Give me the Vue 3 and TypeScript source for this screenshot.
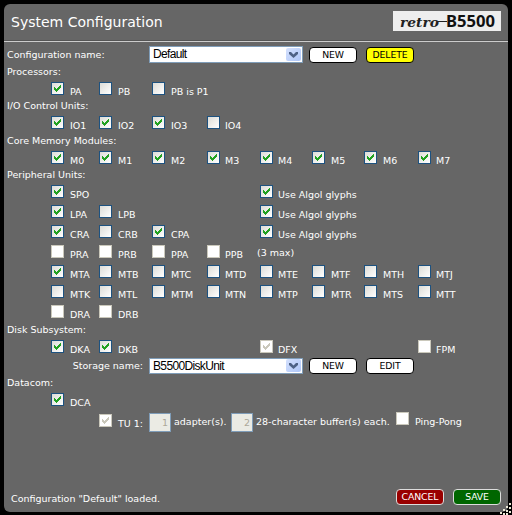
<script setup lang="ts">
type State = 'on' | 'off' | 'disabled' | 'disabled-on'
interface Cell {
  col: number
  label: string
  state: State
  wide?: boolean
}
interface Section {
  title: string
  kind: string
  rows: Cell[][]
}

const line = (labels: string[], states: State[]): Cell[] =>
  labels.map((label, i) => ({ col: i + 2, label, state: states[i] ?? states[states.length - 1] }))
const algol: Cell = { col: 6, label: 'Use Algol glyphs', state: 'on', wide: true }

const sections: Section[] = [
  {
    title: 'Processors:',
    kind: 'processors',
    rows: [line(['PA', 'PB', 'PB is P1'], ['on', 'off'])],
  },
  {
    title: 'I/O Control Units:',
    kind: 'io',
    rows: [line(['IO1', 'IO2', 'IO3', 'IO4'], ['on', 'on', 'on', 'off'])],
  },
  {
    title: 'Core Memory Modules:',
    kind: 'memory',
    rows: [line(['M0', 'M1', 'M2', 'M3', 'M4', 'M5', 'M6', 'M7'], ['on'])],
  },
  {
    title: 'Peripheral Units:',
    kind: 'peripherals',
    rows: [
      [...line(['SPO'], ['on']), algol],
      [...line(['LPA', 'LPB'], ['on', 'off']), algol],
      [...line(['CRA', 'CRB', 'CPA'], ['on', 'off', 'on']), algol],
      line(['PRA', 'PRB', 'PPA', 'PPB'], ['disabled']),
      line(['MTA', 'MTB', 'MTC', 'MTD', 'MTE', 'MTF', 'MTH', 'MTJ'], ['on', 'off']),
      line(['MTK', 'MTL', 'MTM', 'MTN', 'MTP', 'MTR', 'MTS', 'MTT'], ['off']),
      line(['DRA', 'DRB'], ['disabled']),
    ],
  },
  {
    title: 'Disk Subsystem:',
    kind: 'disk',
    rows: [
      [
        ...line(['DKA', 'DKB'], ['on']),
        { col: 6, label: 'DFX', state: 'disabled-on' },
        { col: 9, label: 'FPM', state: 'disabled' },
      ],
    ],
  },
  { title: 'Datacom:', kind: 'datacom', rows: [line(['DCA'], ['on'])] },
]
const tick = 'M2 4h1v1h1v1h1v-1h1v-1h1v-1h1v-1h1v3h-1v1h-1v1h-1v1h-1v1h-1v-1h-1v-1h-1z'
</script>

<template>
  <main class="panel">
    <header class="top">
      <h1>System Configuration</h1>
      <svg class="logo" width="108" height="20" viewBox="0 0 108 20">
        <text class="retro" x="7" y="16" textLength="39" lengthAdjust="spacingAndGlyphs">retro</text>
        <path d="M44 10.500h10" stroke="#222" stroke-width="1" />
        <text class="model" x="53" y="16" textLength="49" lengthAdjust="spacingAndGlyphs">B5500</text>
      </svg>
    </header>

    <div class="picker config">
      <span class="caption">Configuration name:</span>
      <div class="select"><span>Default</span>
        <i><svg width="15" height="13"><path d="M3 4h2l2.500 2.500L10 4h2v2l-4.500 4L3 6z" /></svg></i>
      </div>
      <button class="first">NEW</button><button class="delete">DELETE</button>
    </div>

    <template v-for="s in sections" :key="s.title">
      <section :class="s.kind">
        <h2>{{ s.title }}</h2>
        <div v-for="(row, r) in s.rows" :key="r" class="row">
          <label v-for="c in row" :key="c.label" :class="['c' + c.col, { wide: c.wide }]">
            <svg :class="['box', c.state]" width="13" height="13">
              <path v-if="c.state === 'on' || c.state === 'disabled-on'" :d="tick" />
            </svg>
            <span>{{ c.label }}</span>
          </label>
          <span v-if="s.kind === 'peripherals' && r === 3" class="max">(3 max)</span>
        </div>
      </section>
      <div v-if="s.kind === 'disk'" class="picker storage">
        <span class="caption">Storage name:</span>
        <div class="select"><span>B5500DiskUnit</span>
          <i><svg width="15" height="13"><path d="M3 4h2l2.500 2.500L10 4h2v2l-4.500 4L3 6z" /></svg></i>
        </div>
        <button class="first">NEW</button><button>EDIT</button>
      </div>
    </template>

    <div class="terminal">
      <svg class="box disabled-on" width="13" height="13"><path :d="tick" /></svg>
      <span class="tu">TU 1:</span>
      <span class="num">1</span>
      <span class="adapters">adapter(s).</span>
      <span class="num">2</span>
      <span class="buffers">28-character buffer(s) each.</span>
      <svg class="box disabled ping" width="13" height="13" />
      <span class="pp">Ping-Pong</span>
    </div>

    <footer>
      <span class="status">Configuration "Default" loaded.</span>
      <button class="cancel">CANCEL</button><button class="save">SAVE</button>
    </footer>
    <svg class="grip" width="12" height="12">
      <path d="M9 0h2v2h-2zM6 3h2v2h-2zM9 4h2v2h-2zM3 6h2v2h-2zM6 7h2v2h-2zM9 8h2v2h-2zM0 9h2v2h-2zM3 10h2v2h-2zM6 10h2v2h-2z" />
    </svg>
  </main>
</template>

<style>
body {
  background: #000;
}
</style>
<style scoped>
.panel {
  box-sizing: border-box;
  position: relative;
  width: 504px;
  height: 508px;
  margin: 4px;
  display: flow-root;
  border-radius: 6px;
  background: #666;
  color: #fff;
  font: 9.5px/12px 'DejaVu Sans', sans-serif;
  white-space: nowrap;
}
.top {
  box-sizing: border-box;
  height: 38px;
  padding: 7px 7px 0;
  display: flex;
  justify-content: space-between;
  border-bottom: 1px solid #ccc;
  box-shadow: inset 0 -1px #555;
}
h1 {
  margin: 2px 0 0;
  font: 14px/18px 'DejaVu Sans', sans-serif;
}
.logo {
  background: #eee;
}
.retro {
  font: italic bold 13px 'DejaVu Serif', serif;
  fill: #222;
}
.model {
  font: bold 16px 'Noto Sans', sans-serif;
  fill: #111;
}
.picker {
  display: flex;
  padding-left: 3px;
}
.config {
  margin-top: 4px;
  height: 17px;
}
.storage {
  margin-top: 5px;
  height: 16px;
}
.caption {
  width: 142px;
  padding-top: 3px;
}
.storage .caption {
  box-sizing: border-box;
  padding: 2px 6px 0 0;
  text-align: right;
}
.select {
  box-sizing: border-box;
  width: 154px;
  display: flex;
  justify-content: space-between;
  border: 1px solid #7f9db9;
  padding: 0 1px 0 3px;
  background: #fff;
  color: #000;
  font: 12px/15px 'Liberation Sans', sans-serif;
  letter-spacing: -0.65px;
}
.storage .select {
  line-height: 14px;
}
.select i {
  width: 15px;
  height: 13px;
  margin-top: 1px;
  border-radius: 2px;
  background: linear-gradient(135deg, #d5e1fd, #aec6f8);
}
.storage .select i {
  margin-top: 0;
}
.select i svg {
  display: block;
  fill: #4d6185;
}
button {
  box-sizing: border-box;
  width: 48px;
  height: 16px;
  margin: 0 0 0 9px;
  padding: 0;
  border: 1px solid #000;
  border-radius: 4px;
  background: #fff;
  color: #000;
  font: 9.3px/14px 'DejaVu Sans', sans-serif;
  letter-spacing: -0.1px;
}
.first {
  margin-left: 6px;
}
.config button {
  margin-top: 1px;
}
.delete {
  background: #ff0;
}
h2 {
  margin: 0;
  padding-left: 3px;
  font: 9.5px/12px 'DejaVu Sans', sans-serif;
}
.row {
  display: grid;
  grid-template-columns: 47px 48px 53px 55px 53px 52px 52px 54px 1fr;
  height: 20px;
}
.row label {
  display: flex;
  gap: 6px;
  grid-row: 1;
}
.row span {
  margin-top: 4px;
}
.box {
  box-sizing: border-box;
  width: 13px;
  height: 13px;
  flex: none;
  border: 1px solid #1d5280;
  background: linear-gradient(135deg, #dcdcd7, #fff);
}
.box path {
  fill: #21a121;
  shape-rendering: crispEdges;
}
.disabled,
.disabled-on {
  border-color: #cac8bb;
  background: #fff;
}
.disabled-on path {
  fill: #cac8bb;
}
.c2 { grid-column: 2; }
.c3 { grid-column: 3; }
.c4 { grid-column: 4; }
.c5 { grid-column: 5; }
.c6 { grid-column: 6; }
.c7 { grid-column: 7; }
.c8 { grid-column: 8; }
.c9 { grid-column: 9; }
.row .c5,
.row .c6,
.row .c9 {
  gap: 5px;
}
.row .wide {
  grid-column: 6 / 9;
}
.row .max {
  grid-column: 6 / 9;
  grid-row: 1;
  margin: 2px 0 0 -3px;
}
.processors,
.io,
.memory {
  box-sizing: border-box;
  padding-top: 3px;
}
.processors { height: 34px; }
.processors h2 { height: 16px; }
.io { height: 35px; }
.io h2 { height: 16px; }
.memory { height: 34px; }
.memory h2 { height: 16px; }
.peripherals { padding-top: 3px; }
.peripherals h2 { height: 16px; }
.disk h2 { height: 16px; margin-top: -1px; }
.disk .row { height: 13px; }
.datacom { padding-top: 3px; }
.datacom h2 { height: 16px; }
.terminal {
  display: flex;
  height: 19px;
  padding-left: 95px;
}
.terminal .box { margin-top: 1px; }
.tu { width: 31px; margin: 5px 0 0 6px; }
.num {
  box-sizing: border-box;
  width: 22px;
  border: 1px solid #7f9db9;
  padding: 3px 2px 0 0;
  background: #ebebe4;
  color: #aca899;
  text-align: right;
}
.adapters { margin: 3px 0 0 3px; width: 57px; }
.buffers { margin: 3px 0 0 3px; width: 140px; }
.terminal .ping { margin-top: -1px; }
.pp { margin: 3px 0 0 6px; }
footer {
  display: flex;
  padding-left: 7px;
  margin-top: 57px;
}
.status { width: 376px; padding-top: 4px; }
footer button { border-color: #ddd; color: #fff; }
footer .cancel { background: #900; }
footer .save { background: #060; }
.grip {
  position: absolute;
  right: -4px;
  bottom: -3px;
  fill: #ece9d8;
}
</style>
